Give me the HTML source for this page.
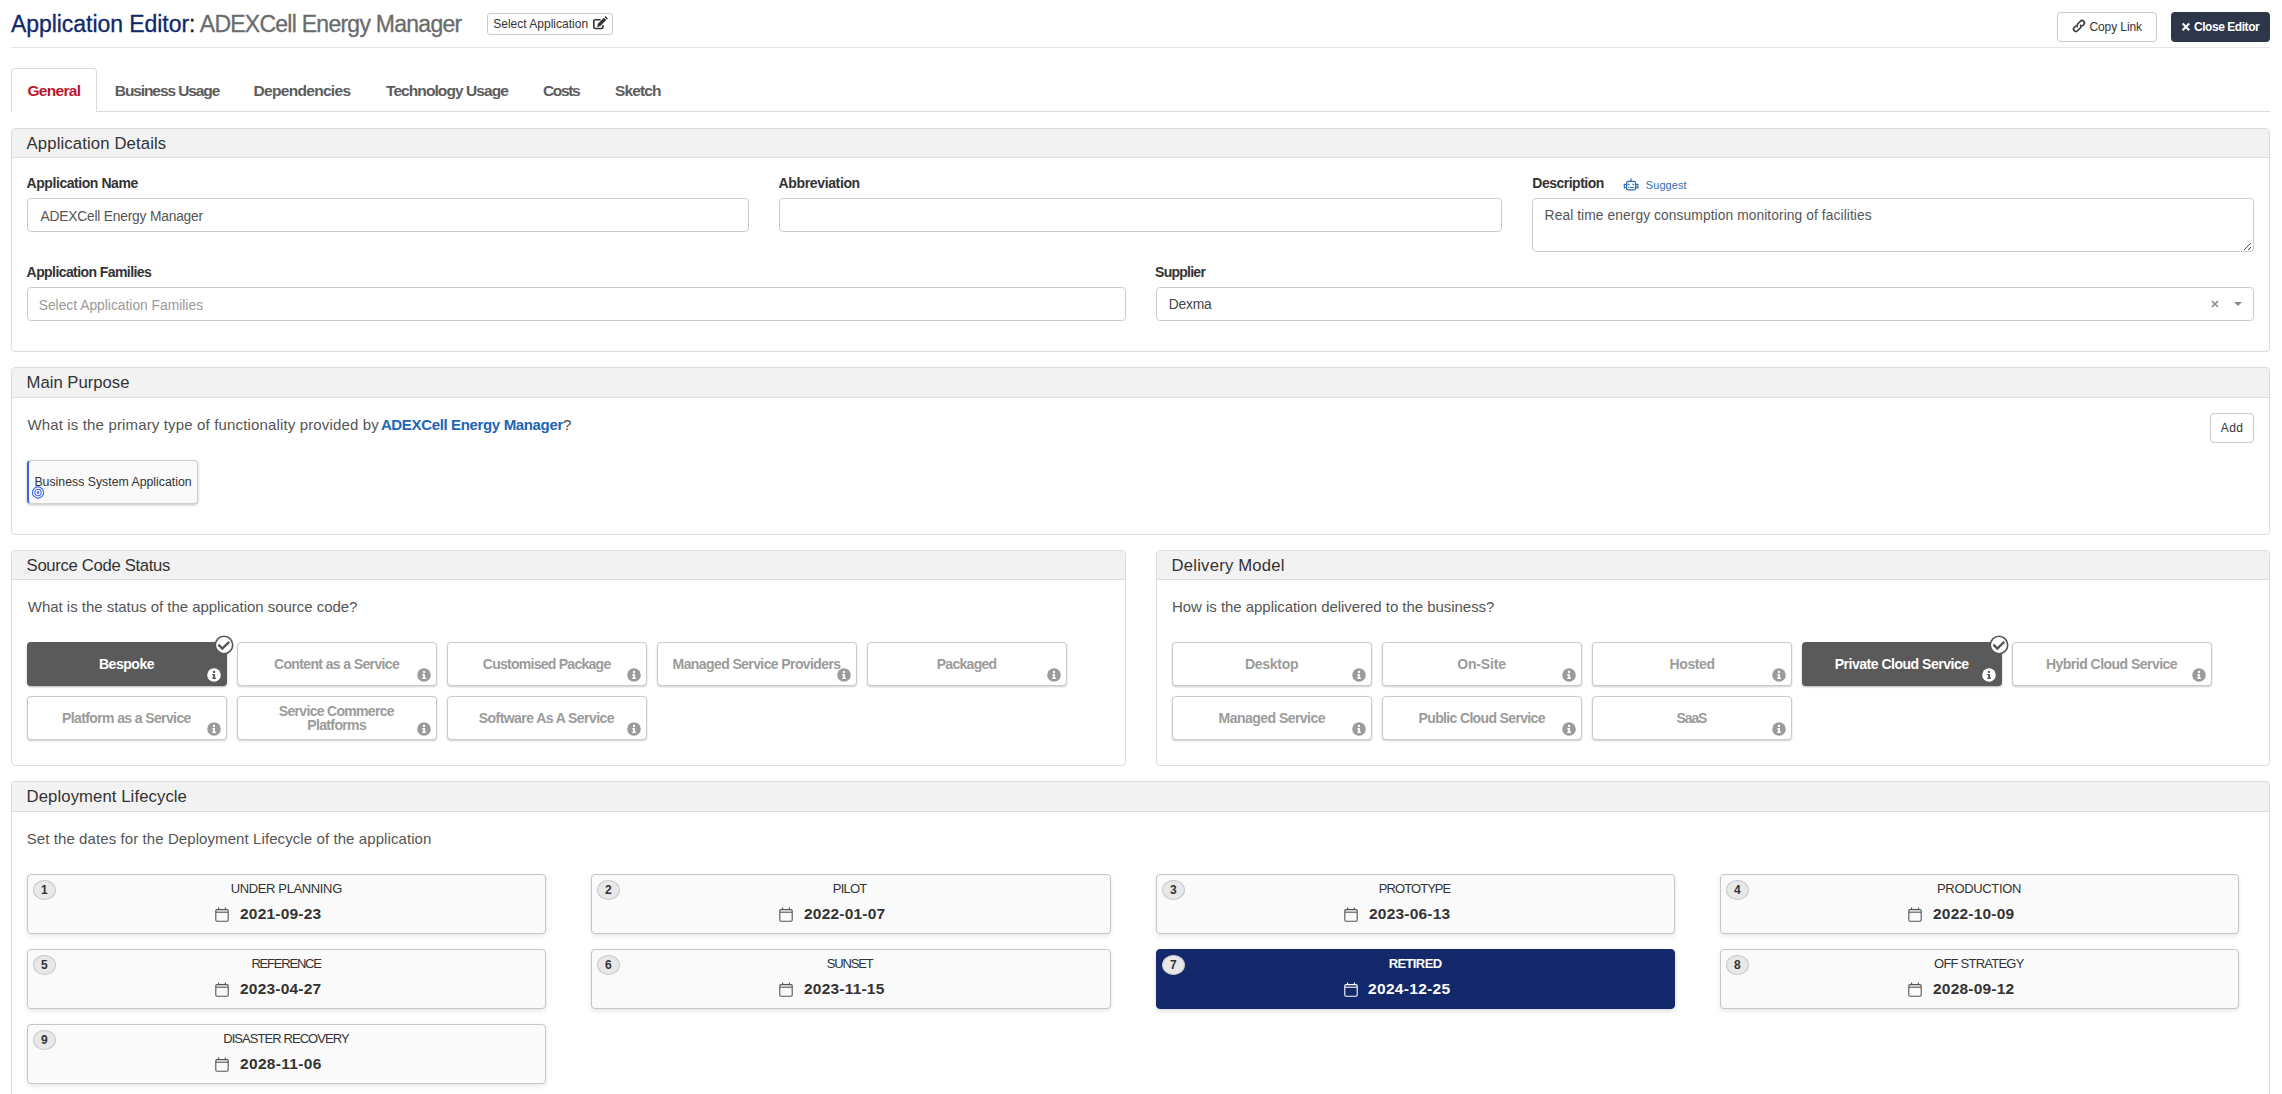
<!DOCTYPE html>
<html><head><meta charset="utf-8"><title>Application Editor</title>
<style>
html,body{margin:0;padding:0;background:#fff;width:2282px;height:1094px;overflow:hidden;font-family:"Liberation Sans", sans-serif;}
body{position:relative;}
svg{display:block}
</style></head><body>
<div id="t_title" style="position:absolute;left:11.00px;top:13.43px;font-size:23px;line-height:23px;font-weight:400;color:#0f2868;letter-spacing:-0.056px;white-space:nowrap;-webkit-text-stroke:0.3px #0f2868;">Application Editor<span style="color:#222;-webkit-text-stroke:0.3px #222">:</span></div>
<div id="t_title3" style="position:absolute;left:199.80px;top:13.43px;font-size:23px;line-height:23px;font-weight:400;color:#6b6b6b;letter-spacing:-0.743px;white-space:nowrap;-webkit-text-stroke:0.3px #6b6b6b;">ADEXCell Energy Manager</div>
<div style="position:absolute;left:487px;top:13px;width:126px;height:22px;box-sizing:border-box;border:1px solid #c9c9c9;border-radius:3px;background:#fff"></div>
<div id="t_selapp" style="position:absolute;left:493.20px;top:18.04px;font-size:12px;line-height:12px;font-weight:400;color:#333;letter-spacing:0.009px;white-space:nowrap;">Select Application</div>
<svg style="position:absolute;left:588px;top:12px" width="24" height="24" viewBox="0 0 24 24"><path d="M12.6 7.8 H7.2 Q5.8 7.8 5.8 9.2 V15.1 Q5.8 16.5 7.2 16.5 H13.6 Q15 16.5 15 15.1 V13" fill="none" stroke="#333" stroke-width="1.6"/><path d="M9.1 14.9 L9.9 11.7 L15.9 5.7 L18.3 8.1 L12.3 14.1 Z" fill="#333"/><path d="M16.5 5.1 L17.5 4.1 L19.9 6.5 L18.9 7.5 Z" fill="#333"/></svg>
<div style="position:absolute;left:2057px;top:12px;width:100px;height:30px;box-sizing:border-box;border:1px solid #c9c9c9;border-radius:4px;background:#fff"></div>
<svg style="position:absolute;left:2070.5px;top:18.4px" width="16" height="16" viewBox="-8 -8 16 16"><g transform="rotate(-45)" fill="none" stroke="#333" stroke-width="1.6"><path d="M-2 -2.3 H-4.4 A2.3 2.3 0 0 0 -4.4 2.3 H-0.5 A2.3 2.3 0 0 0 1.8 0"/><path d="M2 2.3 H4.4 A2.3 2.3 0 0 0 4.4 -2.3 H0.5 A2.3 2.3 0 0 0 -1.8 0"/></g></svg>
<div id="t_copy" style="position:absolute;left:2089.40px;top:21.04px;font-size:12px;line-height:12px;font-weight:400;color:#333;letter-spacing:-0.086px;white-space:nowrap;">Copy Link</div>
<div style="position:absolute;left:2171px;top:12px;width:99px;height:30px;box-sizing:border-box;border-radius:4px;background:#2e3649"></div>
<svg style="position:absolute;left:2181px;top:22px" width="10" height="10" viewBox="0 0 10 10"><path d="M1.6 1.6 L8.2 8.2 M8.2 1.6 L1.6 8.2" stroke="#fff" stroke-width="2.1"/></svg>
<div id="t_close" style="position:absolute;left:2194.00px;top:20.74px;font-size:12px;line-height:12px;font-weight:700;color:#fff;letter-spacing:-0.455px;white-space:nowrap;">Close Editor</div>
<div style="position:absolute;left:11px;top:47px;width:2259px;height:1px;box-sizing:border-box;background:#e6e6e6"></div>
<div style="position:absolute;left:11px;top:111px;width:2259px;height:1px;box-sizing:border-box;background:#dcdcdc"></div>
<div style="position:absolute;left:11px;top:68px;width:86px;height:44px;box-sizing:border-box;border:1px solid #dcdcdc;border-bottom:none;border-radius:4px 4px 0 0;background:#fff"></div>
<div id="t_tab1" style="position:absolute;left:27.40px;top:82.68px;font-size:15.5px;line-height:15.5px;font-weight:700;color:#b8172e;letter-spacing:-0.668px;white-space:nowrap;">General</div>
<div id="t_tab2" style="position:absolute;left:114.80px;top:82.68px;font-size:15.5px;line-height:15.5px;font-weight:700;color:#5c5c5c;letter-spacing:-1.098px;white-space:nowrap;">Business Usage</div>
<div id="t_tab3" style="position:absolute;left:253.50px;top:82.68px;font-size:15.5px;line-height:15.5px;font-weight:700;color:#5c5c5c;letter-spacing:-0.686px;white-space:nowrap;">Dependencies</div>
<div id="t_tab4" style="position:absolute;left:386.00px;top:82.68px;font-size:15.5px;line-height:15.5px;font-weight:700;color:#5c5c5c;letter-spacing:-0.915px;white-space:nowrap;">Technology Usage</div>
<div id="t_tab5" style="position:absolute;left:543.00px;top:82.68px;font-size:15.5px;line-height:15.5px;font-weight:700;color:#5c5c5c;letter-spacing:-1.350px;white-space:nowrap;">Costs</div>
<div id="t_tab6" style="position:absolute;left:615.00px;top:82.68px;font-size:15.5px;line-height:15.5px;font-weight:700;color:#5c5c5c;letter-spacing:-0.880px;white-space:nowrap;">Sketch</div>
<div style="position:absolute;left:11px;top:128px;width:2259px;height:224px;box-sizing:border-box;border:1px solid #dcdcdc;border-radius:4px;background:#fff;"></div>
<div style="position:absolute;left:12px;top:129px;width:2257px;height:29px;box-sizing:border-box;background:#f2f2f2;border-bottom:1px solid #dcdcdc;border-radius:3px 3px 0 0"></div>
<div id="t_p1" style="position:absolute;left:26.60px;top:135.86px;font-size:16.7px;line-height:16.7px;font-weight:400;color:#333;letter-spacing:0.130px;white-space:nowrap;">Application Details</div>
<div id="t_l1" style="position:absolute;left:26.60px;top:176.05px;font-size:14px;line-height:14px;font-weight:700;color:#333;letter-spacing:-0.441px;white-space:nowrap;">Application Name</div>
<div id="t_l2" style="position:absolute;left:778.60px;top:176.05px;font-size:14px;line-height:14px;font-weight:700;color:#333;letter-spacing:-0.365px;white-space:nowrap;">Abbreviation</div>
<div id="t_l3" style="position:absolute;left:1532.30px;top:176.15px;font-size:14px;line-height:14px;font-weight:700;color:#333;letter-spacing:-0.500px;white-space:nowrap;">Description</div>
<svg style="position:absolute;left:1618px;top:172px" width="26" height="26" viewBox="0 0 26 26"><g fill="none" stroke="#2f6db5" stroke-width="1.2"><rect x="8.6" y="9.4" width="9" height="8.4" rx="1.6"/><path d="M13 6.4 V9.4"/><rect x="6.3" y="12.4" width="2.2" height="3.4"/><rect x="17.7" y="12.4" width="2.2" height="3.4"/></g><g fill="#2f6db5"><circle cx="10.6" cy="12.4" r="0.9"/><circle cx="15.3" cy="12.4" r="0.9"/><circle cx="10.5" cy="15.5" r="0.6"/><rect x="11.9" y="15" width="4" height="1"/></g></svg>
<div id="t_sugg" style="position:absolute;left:1645.80px;top:180.39px;font-size:11px;line-height:11px;font-weight:400;color:#2f6db5;letter-spacing:0.071px;white-space:nowrap;">Suggest</div>
<div style="position:absolute;left:27px;top:198px;width:722px;height:34px;box-sizing:border-box;border:1px solid #cccccc;border-radius:4px;background:#fff"></div>
<div style="position:absolute;left:779px;top:198px;width:723px;height:34px;box-sizing:border-box;border:1px solid #cccccc;border-radius:4px;background:#fff"></div>
<div style="position:absolute;left:1532px;top:198px;width:722px;height:54px;box-sizing:border-box;border:1px solid #cccccc;border-radius:4px;background:#fff"></div>
<svg style="position:absolute;left:2243px;top:242px" width="9" height="9" viewBox="0 0 9 9"><path d="M1 8 L8 1 M5 8 L8 5" stroke="#444" stroke-width="1"/></svg>
<div id="t_in1" style="position:absolute;left:40.40px;top:210.02px;font-size:13.8px;line-height:13.8px;font-weight:400;color:#555;letter-spacing:-0.201px;white-space:nowrap;">ADEXCell Energy Manager</div>
<div id="t_in3" style="position:absolute;left:1544.60px;top:209.12px;font-size:13.8px;line-height:13.8px;font-weight:400;color:#555;letter-spacing:0.081px;white-space:nowrap;">Real time energy consumption monitoring of facilities</div>
<div id="t_l4" style="position:absolute;left:26.60px;top:264.95px;font-size:14px;line-height:14px;font-weight:700;color:#333;letter-spacing:-0.578px;white-space:nowrap;">Application Families</div>
<div id="t_l5" style="position:absolute;left:1155.10px;top:265.15px;font-size:14px;line-height:14px;font-weight:700;color:#333;letter-spacing:-0.751px;white-space:nowrap;">Supplier</div>
<div style="position:absolute;left:27px;top:287px;width:1099px;height:34px;box-sizing:border-box;border:1px solid #cccccc;border-radius:4px;background:#fff"></div>
<div style="position:absolute;left:1156px;top:287px;width:1098px;height:34px;box-sizing:border-box;border:1px solid #cccccc;border-radius:4px;background:#fff"></div>
<div id="t_in4" style="position:absolute;left:38.70px;top:299.12px;font-size:13.8px;line-height:13.8px;font-weight:400;color:#999;letter-spacing:0.009px;white-space:nowrap;">Select Application Families</div>
<div id="t_in5" style="position:absolute;left:1168.80px;top:297.52px;font-size:13.8px;line-height:13.8px;font-weight:400;color:#444;letter-spacing:-0.200px;white-space:nowrap;">Dexma</div>
<svg style="position:absolute;left:2211px;top:300px" width="8" height="8" viewBox="0 0 8 8"><path d="M1 1 L7 7 M7 1 L1 7" stroke="#888" stroke-width="1.6"/></svg>
<svg style="position:absolute;left:2234px;top:302px" width="8" height="4" viewBox="0 0 8 4"><path d="M0 0 H8 L4 4 Z" fill="#888"/></svg>
<div style="position:absolute;left:11px;top:367px;width:2259px;height:168px;box-sizing:border-box;border:1px solid #dcdcdc;border-radius:4px;background:#fff;"></div>
<div style="position:absolute;left:12px;top:368px;width:2257px;height:30px;box-sizing:border-box;background:#f2f2f2;border-bottom:1px solid #dcdcdc;border-radius:3px 3px 0 0"></div>
<div id="t_p2" style="position:absolute;left:26.60px;top:374.86px;font-size:16.7px;line-height:16.7px;font-weight:400;color:#333;letter-spacing:-0.007px;white-space:nowrap;">Main Purpose</div>
<div id="t_q1" style="position:absolute;left:27.40px;top:417.10px;font-size:15px;line-height:15px;font-weight:400;color:#555;letter-spacing:0.151px;white-space:nowrap;">What is the primary type of functionality provided by</div>
<div id="t_q1b" style="position:absolute;left:380.90px;top:417.10px;font-size:15px;line-height:15px;font-weight:700;color:#2065b5;letter-spacing:-0.351px;white-space:nowrap;">ADEXCell Energy Manager<span style="color:#444;font-weight:400">?</span></div>
<div style="position:absolute;left:2210px;top:413px;width:44px;height:30px;box-sizing:border-box;border:1px solid #c9c9c9;border-radius:4px;background:#fff"></div>
<div id="t_add" style="position:absolute;left:2220.70px;top:421.74px;font-size:12px;line-height:12px;font-weight:400;color:#333;letter-spacing:0.500px;white-space:nowrap;">Add</div>
<div style="position:absolute;left:27px;top:460px;width:171px;height:44px;box-sizing:border-box;border:1px solid #cfcfcf;border-left:2px solid #3c63f0;border-radius:4px;background:#fafafa;box-shadow:0 1px 3px rgba(0,0,0,.25)"></div>
<div id="t_bsa" style="position:absolute;left:34.40px;top:476.39px;font-size:12.3px;line-height:12.3px;font-weight:400;color:#333;letter-spacing:0.002px;white-space:nowrap;">Business System Application</div>
<svg style="position:absolute;left:31px;top:486px" width="14" height="14" viewBox="0 0 14 14"><g fill="none" stroke="#3c63f0"><circle cx="7" cy="6.5" r="5.6" stroke-width="1.1"/><circle cx="7" cy="6.5" r="3.2" stroke-width="1.1"/></g><circle cx="7" cy="6.5" r="1.3" fill="#3c63f0"/></svg>
<div style="position:absolute;left:11px;top:550px;width:1115px;height:216px;box-sizing:border-box;border:1px solid #dcdcdc;border-radius:4px;background:#fff;"></div>
<div style="position:absolute;left:12px;top:551px;width:1113px;height:29px;box-sizing:border-box;background:#f2f2f2;border-bottom:1px solid #dcdcdc;border-radius:3px 3px 0 0"></div>
<div id="t_p3" style="position:absolute;left:26.60px;top:557.86px;font-size:16.7px;line-height:16.7px;font-weight:400;color:#333;letter-spacing:-0.334px;white-space:nowrap;">Source Code Status</div>
<div id="t_q3" style="position:absolute;left:27.80px;top:599.30px;font-size:15px;line-height:15px;font-weight:400;color:#555;letter-spacing:-0.028px;white-space:nowrap;">What is the status of the application source code?</div>
<div style="position:absolute;left:27px;top:642px;width:200px;height:44px;box-sizing:border-box;border-radius:4px;background:#5a5a5a;box-shadow:0 1px 2px rgba(0,0,0,.3)"></div>
<div id="s1" style="position:absolute;left:98.95px;top:657.15px;font-size:14px;line-height:14px;font-weight:700;color:#fff;letter-spacing:-0.468px;white-space:nowrap;">Bespoke</div>
<svg style="position:absolute;left:207px;top:667.8px" width="14" height="14" viewBox="0 0 14 14"><circle cx="7" cy="7" r="6.8" fill="#fff"/><circle cx="7" cy="3.9" r="1.2" fill="#5a5a5a"/><path d="M5.3 6 H8 V9.6 H8.9 V11 H5.3 V9.6 H6.2 V7.4 H5.3 Z" fill="#5a5a5a"/></svg>
<svg style="position:absolute;left:214.3px;top:634.7px" width="20" height="20" viewBox="0 0 20 20"><circle cx="10" cy="10" r="8.7" fill="#fff" stroke="#555" stroke-width="1.6"/><path d="M4.4 9.6 L8.3 13.6 L15.2 6.9" fill="none" stroke="#555" stroke-width="2.4"/></svg>
<div style="position:absolute;left:237px;top:642px;width:200px;height:44px;box-sizing:border-box;border:1px solid #cbcbcb;border-radius:4px;background:#fff;box-shadow:0 1px 2px rgba(0,0,0,.2)"></div>
<div id="s2" style="position:absolute;left:273.90px;top:657.15px;font-size:14px;line-height:14px;font-weight:700;color:#9b9b9b;letter-spacing:-0.622px;white-space:nowrap;">Content as a Service</div>
<svg style="position:absolute;left:417px;top:667.8px" width="14" height="14" viewBox="0 0 14 14"><circle cx="7" cy="7" r="6.8" fill="#9b9b9b"/><circle cx="7" cy="3.9" r="1.2" fill="#fff"/><path d="M5.3 6 H8 V9.6 H8.9 V11 H5.3 V9.6 H6.2 V7.4 H5.3 Z" fill="#fff"/></svg>
<div style="position:absolute;left:447px;top:642px;width:200px;height:44px;box-sizing:border-box;border:1px solid #cbcbcb;border-radius:4px;background:#fff;box-shadow:0 1px 2px rgba(0,0,0,.2)"></div>
<div id="s3" style="position:absolute;left:482.85px;top:657.15px;font-size:14px;line-height:14px;font-weight:700;color:#9b9b9b;letter-spacing:-0.736px;white-space:nowrap;">Customised Package</div>
<svg style="position:absolute;left:627px;top:667.8px" width="14" height="14" viewBox="0 0 14 14"><circle cx="7" cy="7" r="6.8" fill="#9b9b9b"/><circle cx="7" cy="3.9" r="1.2" fill="#fff"/><path d="M5.3 6 H8 V9.6 H8.9 V11 H5.3 V9.6 H6.2 V7.4 H5.3 Z" fill="#fff"/></svg>
<div style="position:absolute;left:657px;top:642px;width:200px;height:44px;box-sizing:border-box;border:1px solid #cbcbcb;border-radius:4px;background:#fff;box-shadow:0 1px 2px rgba(0,0,0,.2)"></div>
<div id="s4" style="position:absolute;left:672.60px;top:657.15px;font-size:14px;line-height:14px;font-weight:700;color:#9b9b9b;letter-spacing:-0.598px;white-space:nowrap;">Managed Service Providers</div>
<svg style="position:absolute;left:837px;top:667.8px" width="14" height="14" viewBox="0 0 14 14"><circle cx="7" cy="7" r="6.8" fill="#9b9b9b"/><circle cx="7" cy="3.9" r="1.2" fill="#fff"/><path d="M5.3 6 H8 V9.6 H8.9 V11 H5.3 V9.6 H6.2 V7.4 H5.3 Z" fill="#fff"/></svg>
<div style="position:absolute;left:867px;top:642px;width:200px;height:44px;box-sizing:border-box;border:1px solid #cbcbcb;border-radius:4px;background:#fff;box-shadow:0 1px 2px rgba(0,0,0,.2)"></div>
<div id="s5" style="position:absolute;left:936.75px;top:657.15px;font-size:14px;line-height:14px;font-weight:700;color:#9b9b9b;letter-spacing:-0.713px;white-space:nowrap;">Packaged</div>
<svg style="position:absolute;left:1047px;top:667.8px" width="14" height="14" viewBox="0 0 14 14"><circle cx="7" cy="7" r="6.8" fill="#9b9b9b"/><circle cx="7" cy="3.9" r="1.2" fill="#fff"/><path d="M5.3 6 H8 V9.6 H8.9 V11 H5.3 V9.6 H6.2 V7.4 H5.3 Z" fill="#fff"/></svg>
<div style="position:absolute;left:27px;top:696px;width:200px;height:44px;box-sizing:border-box;border:1px solid #cbcbcb;border-radius:4px;background:#fff;box-shadow:0 1px 2px rgba(0,0,0,.2)"></div>
<div id="s6" style="position:absolute;left:62.10px;top:711.15px;font-size:14px;line-height:14px;font-weight:700;color:#9b9b9b;letter-spacing:-0.620px;white-space:nowrap;">Platform as a Service</div>
<svg style="position:absolute;left:207px;top:721.8px" width="14" height="14" viewBox="0 0 14 14"><circle cx="7" cy="7" r="6.8" fill="#9b9b9b"/><circle cx="7" cy="3.9" r="1.2" fill="#fff"/><path d="M5.3 6 H8 V9.6 H8.9 V11 H5.3 V9.6 H6.2 V7.4 H5.3 Z" fill="#fff"/></svg>
<div style="position:absolute;left:237px;top:696px;width:200px;height:44px;box-sizing:border-box;border:1px solid #cbcbcb;border-radius:4px;background:#fff;box-shadow:0 1px 2px rgba(0,0,0,.2)"></div>
<div id="s7a" style="position:absolute;left:278.85px;top:703.95px;font-size:14px;line-height:14px;font-weight:700;color:#9b9b9b;letter-spacing:-0.691px;white-space:nowrap;">Service Commerce</div>
<div id="s7b" style="position:absolute;left:307.30px;top:717.85px;font-size:14px;line-height:14px;font-weight:700;color:#9b9b9b;letter-spacing:-0.650px;white-space:nowrap;">Platforms</div>
<svg style="position:absolute;left:417px;top:721.8px" width="14" height="14" viewBox="0 0 14 14"><circle cx="7" cy="7" r="6.8" fill="#9b9b9b"/><circle cx="7" cy="3.9" r="1.2" fill="#fff"/><path d="M5.3 6 H8 V9.6 H8.9 V11 H5.3 V9.6 H6.2 V7.4 H5.3 Z" fill="#fff"/></svg>
<div style="position:absolute;left:447px;top:696px;width:200px;height:44px;box-sizing:border-box;border:1px solid #cbcbcb;border-radius:4px;background:#fff;box-shadow:0 1px 2px rgba(0,0,0,.2)"></div>
<div id="s8" style="position:absolute;left:478.85px;top:711.15px;font-size:14px;line-height:14px;font-weight:700;color:#9b9b9b;letter-spacing:-0.570px;white-space:nowrap;">Software As A Service</div>
<svg style="position:absolute;left:627px;top:721.8px" width="14" height="14" viewBox="0 0 14 14"><circle cx="7" cy="7" r="6.8" fill="#9b9b9b"/><circle cx="7" cy="3.9" r="1.2" fill="#fff"/><path d="M5.3 6 H8 V9.6 H8.9 V11 H5.3 V9.6 H6.2 V7.4 H5.3 Z" fill="#fff"/></svg>
<div style="position:absolute;left:1156px;top:550px;width:1114px;height:216px;box-sizing:border-box;border:1px solid #dcdcdc;border-radius:4px;background:#fff;"></div>
<div style="position:absolute;left:1157px;top:551px;width:1112px;height:29px;box-sizing:border-box;background:#f2f2f2;border-bottom:1px solid #dcdcdc;border-radius:3px 3px 0 0"></div>
<div id="t_p4" style="position:absolute;left:1171.60px;top:557.86px;font-size:16.7px;line-height:16.7px;font-weight:400;color:#333;letter-spacing:0.195px;white-space:nowrap;">Delivery Model</div>
<div id="t_q4" style="position:absolute;left:1172.00px;top:599.30px;font-size:15px;line-height:15px;font-weight:400;color:#555;letter-spacing:-0.041px;white-space:nowrap;">How is the application delivered to the business?</div>
<div style="position:absolute;left:1172px;top:642px;width:200px;height:44px;box-sizing:border-box;border:1px solid #cbcbcb;border-radius:4px;background:#fff;box-shadow:0 1px 2px rgba(0,0,0,.2)"></div>
<div id="d1" style="position:absolute;left:1244.90px;top:657.15px;font-size:14px;line-height:14px;font-weight:700;color:#9b9b9b;letter-spacing:-0.261px;white-space:nowrap;">Desktop</div>
<svg style="position:absolute;left:1352px;top:667.8px" width="14" height="14" viewBox="0 0 14 14"><circle cx="7" cy="7" r="6.8" fill="#9b9b9b"/><circle cx="7" cy="3.9" r="1.2" fill="#fff"/><path d="M5.3 6 H8 V9.6 H8.9 V11 H5.3 V9.6 H6.2 V7.4 H5.3 Z" fill="#fff"/></svg>
<div style="position:absolute;left:1382px;top:642px;width:200px;height:44px;box-sizing:border-box;border:1px solid #cbcbcb;border-radius:4px;background:#fff;box-shadow:0 1px 2px rgba(0,0,0,.2)"></div>
<div id="d2" style="position:absolute;left:1457.25px;top:657.15px;font-size:14px;line-height:14px;font-weight:700;color:#9b9b9b;letter-spacing:-0.167px;white-space:nowrap;">On-Site</div>
<svg style="position:absolute;left:1562px;top:667.8px" width="14" height="14" viewBox="0 0 14 14"><circle cx="7" cy="7" r="6.8" fill="#9b9b9b"/><circle cx="7" cy="3.9" r="1.2" fill="#fff"/><path d="M5.3 6 H8 V9.6 H8.9 V11 H5.3 V9.6 H6.2 V7.4 H5.3 Z" fill="#fff"/></svg>
<div style="position:absolute;left:1592px;top:642px;width:200px;height:44px;box-sizing:border-box;border:1px solid #cbcbcb;border-radius:4px;background:#fff;box-shadow:0 1px 2px rgba(0,0,0,.2)"></div>
<div id="d3" style="position:absolute;left:1669.45px;top:657.15px;font-size:14px;line-height:14px;font-weight:700;color:#9b9b9b;letter-spacing:-0.360px;white-space:nowrap;">Hosted</div>
<svg style="position:absolute;left:1772px;top:667.8px" width="14" height="14" viewBox="0 0 14 14"><circle cx="7" cy="7" r="6.8" fill="#9b9b9b"/><circle cx="7" cy="3.9" r="1.2" fill="#fff"/><path d="M5.3 6 H8 V9.6 H8.9 V11 H5.3 V9.6 H6.2 V7.4 H5.3 Z" fill="#fff"/></svg>
<div style="position:absolute;left:1802px;top:642px;width:200px;height:44px;box-sizing:border-box;border-radius:4px;background:#5a5a5a;box-shadow:0 1px 2px rgba(0,0,0,.3)"></div>
<div id="d4" style="position:absolute;left:1834.65px;top:657.15px;font-size:14px;line-height:14px;font-weight:700;color:#fff;letter-spacing:-0.480px;white-space:nowrap;">Private Cloud Service</div>
<svg style="position:absolute;left:1982px;top:667.8px" width="14" height="14" viewBox="0 0 14 14"><circle cx="7" cy="7" r="6.8" fill="#fff"/><circle cx="7" cy="3.9" r="1.2" fill="#5a5a5a"/><path d="M5.3 6 H8 V9.6 H8.9 V11 H5.3 V9.6 H6.2 V7.4 H5.3 Z" fill="#5a5a5a"/></svg>
<svg style="position:absolute;left:1989.3px;top:634.7px" width="20" height="20" viewBox="0 0 20 20"><circle cx="10" cy="10" r="8.7" fill="#fff" stroke="#555" stroke-width="1.6"/><path d="M4.4 9.6 L8.3 13.6 L15.2 6.9" fill="none" stroke="#555" stroke-width="2.4"/></svg>
<div style="position:absolute;left:2012px;top:642px;width:200px;height:44px;box-sizing:border-box;border:1px solid #cbcbcb;border-radius:4px;background:#fff;box-shadow:0 1px 2px rgba(0,0,0,.2)"></div>
<div id="d5" style="position:absolute;left:2046.00px;top:657.15px;font-size:14px;line-height:14px;font-weight:700;color:#9b9b9b;letter-spacing:-0.526px;white-space:nowrap;">Hybrid Cloud Service</div>
<svg style="position:absolute;left:2192px;top:667.8px" width="14" height="14" viewBox="0 0 14 14"><circle cx="7" cy="7" r="6.8" fill="#9b9b9b"/><circle cx="7" cy="3.9" r="1.2" fill="#fff"/><path d="M5.3 6 H8 V9.6 H8.9 V11 H5.3 V9.6 H6.2 V7.4 H5.3 Z" fill="#fff"/></svg>
<div style="position:absolute;left:1172px;top:696px;width:200px;height:44px;box-sizing:border-box;border:1px solid #cbcbcb;border-radius:4px;background:#fff;box-shadow:0 1px 2px rgba(0,0,0,.2)"></div>
<div id="d6" style="position:absolute;left:1218.60px;top:711.15px;font-size:14px;line-height:14px;font-weight:700;color:#9b9b9b;letter-spacing:-0.534px;white-space:nowrap;">Managed Service</div>
<svg style="position:absolute;left:1352px;top:721.8px" width="14" height="14" viewBox="0 0 14 14"><circle cx="7" cy="7" r="6.8" fill="#9b9b9b"/><circle cx="7" cy="3.9" r="1.2" fill="#fff"/><path d="M5.3 6 H8 V9.6 H8.9 V11 H5.3 V9.6 H6.2 V7.4 H5.3 Z" fill="#fff"/></svg>
<div style="position:absolute;left:1382px;top:696px;width:200px;height:44px;box-sizing:border-box;border:1px solid #cbcbcb;border-radius:4px;background:#fff;box-shadow:0 1px 2px rgba(0,0,0,.2)"></div>
<div id="d7" style="position:absolute;left:1418.55px;top:711.15px;font-size:14px;line-height:14px;font-weight:700;color:#9b9b9b;letter-spacing:-0.647px;white-space:nowrap;">Public Cloud Service</div>
<svg style="position:absolute;left:1562px;top:721.8px" width="14" height="14" viewBox="0 0 14 14"><circle cx="7" cy="7" r="6.8" fill="#9b9b9b"/><circle cx="7" cy="3.9" r="1.2" fill="#fff"/><path d="M5.3 6 H8 V9.6 H8.9 V11 H5.3 V9.6 H6.2 V7.4 H5.3 Z" fill="#fff"/></svg>
<div style="position:absolute;left:1592px;top:696px;width:200px;height:44px;box-sizing:border-box;border:1px solid #cbcbcb;border-radius:4px;background:#fff;box-shadow:0 1px 2px rgba(0,0,0,.2)"></div>
<div id="d8" style="position:absolute;left:1676.60px;top:711.15px;font-size:14px;line-height:14px;font-weight:700;color:#9b9b9b;letter-spacing:-1.134px;white-space:nowrap;">SaaS</div>
<svg style="position:absolute;left:1772px;top:721.8px" width="14" height="14" viewBox="0 0 14 14"><circle cx="7" cy="7" r="6.8" fill="#9b9b9b"/><circle cx="7" cy="3.9" r="1.2" fill="#fff"/><path d="M5.3 6 H8 V9.6 H8.9 V11 H5.3 V9.6 H6.2 V7.4 H5.3 Z" fill="#fff"/></svg>
<div style="position:absolute;left:11px;top:781px;width:2259px;height:340px;box-sizing:border-box;border:1px solid #dcdcdc;border-radius:4px;background:#fff;border-bottom:none;border-bottom-left-radius:0;border-bottom-right-radius:0;"></div>
<div style="position:absolute;left:12px;top:782px;width:2257px;height:30px;box-sizing:border-box;background:#f2f2f2;border-bottom:1px solid #dcdcdc;border-radius:3px 3px 0 0"></div>
<div id="t_p5" style="position:absolute;left:26.60px;top:788.86px;font-size:16.7px;line-height:16.7px;font-weight:400;color:#333;letter-spacing:0.089px;white-space:nowrap;">Deployment Lifecycle</div>
<div id="t_q5" style="position:absolute;left:26.70px;top:830.90px;font-size:15px;line-height:15px;font-weight:400;color:#555;letter-spacing:0.088px;white-space:nowrap;">Set the dates for the Deployment Lifecycle of the application</div>
<div style="position:absolute;left:27px;top:874px;width:519px;height:60px;box-sizing:border-box;border:1px solid #c6c6c6;border-radius:4px;background:#fafafa;box-shadow:0 2px 5px rgba(0,0,0,.1)"></div>
<div style="position:absolute;left:33px;top:880px;width:22.5px;height:20px;box-sizing:border-box;border:1px solid #c9c9c9;border-radius:50%;background:#e8e8e8"></div>
<div style="position:absolute;left:33px;top:880px;width:22.5px;height:20px;line-height:20px;text-align:center;font-size:12px;font-weight:700;color:#333">1</div>
<div id="c1t" style="position:absolute;left:230.70px;top:882.00px;font-size:13px;line-height:13px;font-weight:400;color:#333;letter-spacing:-0.364px;white-space:nowrap;">UNDER PLANNING</div>
<svg style="position:absolute;left:215px;top:907px" width="14" height="15" viewBox="0 0 14 15"><g fill="none" stroke="#555" stroke-width="1.1"><rect x="0.8" y="2.6" width="12.4" height="11.6" rx="1.2"/><path d="M0.8 5.2 H13.2"/><path d="M3.6 0.4 V3 M10.4 0.4 V3"/></g></svg>
<div id="c1d" style="position:absolute;left:240.00px;top:906.38px;font-size:15.5px;line-height:15.5px;font-weight:700;color:#333;letter-spacing:0.210px;white-space:nowrap;">2021-09-23</div>
<div style="position:absolute;left:591px;top:874px;width:520px;height:60px;box-sizing:border-box;border:1px solid #c6c6c6;border-radius:4px;background:#fafafa;box-shadow:0 2px 5px rgba(0,0,0,.1)"></div>
<div style="position:absolute;left:597px;top:880px;width:22.5px;height:20px;box-sizing:border-box;border:1px solid #c9c9c9;border-radius:50%;background:#e8e8e8"></div>
<div style="position:absolute;left:597px;top:880px;width:22.5px;height:20px;line-height:20px;text-align:center;font-size:12px;font-weight:700;color:#333">2</div>
<div id="c2t" style="position:absolute;left:832.75px;top:882.00px;font-size:13px;line-height:13px;font-weight:400;color:#333;letter-spacing:-0.750px;white-space:nowrap;">PILOT</div>
<svg style="position:absolute;left:779px;top:907px" width="14" height="15" viewBox="0 0 14 15"><g fill="none" stroke="#555" stroke-width="1.1"><rect x="0.8" y="2.6" width="12.4" height="11.6" rx="1.2"/><path d="M0.8 5.2 H13.2"/><path d="M3.6 0.4 V3 M10.4 0.4 V3"/></g></svg>
<div id="c2d" style="position:absolute;left:804.00px;top:906.38px;font-size:15.5px;line-height:15.5px;font-weight:700;color:#333;letter-spacing:0.210px;white-space:nowrap;">2022-01-07</div>
<div style="position:absolute;left:1156px;top:874px;width:519px;height:60px;box-sizing:border-box;border:1px solid #c6c6c6;border-radius:4px;background:#fafafa;box-shadow:0 2px 5px rgba(0,0,0,.1)"></div>
<div style="position:absolute;left:1162px;top:880px;width:22.5px;height:20px;box-sizing:border-box;border:1px solid #c9c9c9;border-radius:50%;background:#e8e8e8"></div>
<div style="position:absolute;left:1162px;top:880px;width:22.5px;height:20px;line-height:20px;text-align:center;font-size:12px;font-weight:700;color:#333">3</div>
<div id="c3t" style="position:absolute;left:1378.85px;top:882.00px;font-size:13px;line-height:13px;font-weight:400;color:#333;letter-spacing:-0.939px;white-space:nowrap;">PROTOTYPE</div>
<svg style="position:absolute;left:1344px;top:907px" width="14" height="15" viewBox="0 0 14 15"><g fill="none" stroke="#555" stroke-width="1.1"><rect x="0.8" y="2.6" width="12.4" height="11.6" rx="1.2"/><path d="M0.8 5.2 H13.2"/><path d="M3.6 0.4 V3 M10.4 0.4 V3"/></g></svg>
<div id="c3d" style="position:absolute;left:1369.00px;top:906.38px;font-size:15.5px;line-height:15.5px;font-weight:700;color:#333;letter-spacing:0.210px;white-space:nowrap;">2023-06-13</div>
<div style="position:absolute;left:1720px;top:874px;width:519px;height:60px;box-sizing:border-box;border:1px solid #c6c6c6;border-radius:4px;background:#fafafa;box-shadow:0 2px 5px rgba(0,0,0,.1)"></div>
<div style="position:absolute;left:1726px;top:880px;width:22.5px;height:20px;box-sizing:border-box;border:1px solid #c9c9c9;border-radius:50%;background:#e8e8e8"></div>
<div style="position:absolute;left:1726px;top:880px;width:22.5px;height:20px;line-height:20px;text-align:center;font-size:12px;font-weight:700;color:#333">4</div>
<div id="c4t" style="position:absolute;left:1937.00px;top:882.00px;font-size:13px;line-height:13px;font-weight:400;color:#333;letter-spacing:-0.333px;white-space:nowrap;">PRODUCTION</div>
<svg style="position:absolute;left:1908px;top:907px" width="14" height="15" viewBox="0 0 14 15"><g fill="none" stroke="#555" stroke-width="1.1"><rect x="0.8" y="2.6" width="12.4" height="11.6" rx="1.2"/><path d="M0.8 5.2 H13.2"/><path d="M3.6 0.4 V3 M10.4 0.4 V3"/></g></svg>
<div id="c4d" style="position:absolute;left:1933.00px;top:906.38px;font-size:15.5px;line-height:15.5px;font-weight:700;color:#333;letter-spacing:0.210px;white-space:nowrap;">2022-10-09</div>
<div style="position:absolute;left:27px;top:949px;width:519px;height:60px;box-sizing:border-box;border:1px solid #c6c6c6;border-radius:4px;background:#fafafa;box-shadow:0 2px 5px rgba(0,0,0,.1)"></div>
<div style="position:absolute;left:33px;top:955px;width:22.5px;height:20px;box-sizing:border-box;border:1px solid #c9c9c9;border-radius:50%;background:#e8e8e8"></div>
<div style="position:absolute;left:33px;top:955px;width:22.5px;height:20px;line-height:20px;text-align:center;font-size:12px;font-weight:700;color:#333">5</div>
<div id="c5t" style="position:absolute;left:251.40px;top:957.00px;font-size:13px;line-height:13px;font-weight:400;color:#333;letter-spacing:-1.200px;white-space:nowrap;">REFERENCE</div>
<svg style="position:absolute;left:215px;top:982px" width="14" height="15" viewBox="0 0 14 15"><g fill="none" stroke="#555" stroke-width="1.1"><rect x="0.8" y="2.6" width="12.4" height="11.6" rx="1.2"/><path d="M0.8 5.2 H13.2"/><path d="M3.6 0.4 V3 M10.4 0.4 V3"/></g></svg>
<div id="c5d" style="position:absolute;left:240.00px;top:981.38px;font-size:15.5px;line-height:15.5px;font-weight:700;color:#333;letter-spacing:0.210px;white-space:nowrap;">2023-04-27</div>
<div style="position:absolute;left:591px;top:949px;width:520px;height:60px;box-sizing:border-box;border:1px solid #c6c6c6;border-radius:4px;background:#fafafa;box-shadow:0 2px 5px rgba(0,0,0,.1)"></div>
<div style="position:absolute;left:597px;top:955px;width:22.5px;height:20px;box-sizing:border-box;border:1px solid #c9c9c9;border-radius:50%;background:#e8e8e8"></div>
<div style="position:absolute;left:597px;top:955px;width:22.5px;height:20px;line-height:20px;text-align:center;font-size:12px;font-weight:700;color:#333">6</div>
<div id="c6t" style="position:absolute;left:826.70px;top:957.00px;font-size:13px;line-height:13px;font-weight:400;color:#333;letter-spacing:-1.160px;white-space:nowrap;">SUNSET</div>
<svg style="position:absolute;left:779px;top:982px" width="14" height="15" viewBox="0 0 14 15"><g fill="none" stroke="#555" stroke-width="1.1"><rect x="0.8" y="2.6" width="12.4" height="11.6" rx="1.2"/><path d="M0.8 5.2 H13.2"/><path d="M3.6 0.4 V3 M10.4 0.4 V3"/></g></svg>
<div id="c6d" style="position:absolute;left:804.00px;top:981.38px;font-size:15.5px;line-height:15.5px;font-weight:700;color:#333;letter-spacing:0.210px;white-space:nowrap;">2023-11-15</div>
<div style="position:absolute;left:1156px;top:949px;width:519px;height:60px;box-sizing:border-box;border:1px solid #13296b;border-radius:4px;background:#13296b;box-shadow:0 2px 5px rgba(0,0,0,.15)"></div>
<div style="position:absolute;left:1162px;top:955px;width:22.5px;height:20px;box-sizing:border-box;border:1px solid #c9c9c9;border-radius:50%;background:#e8e8e8"></div>
<div style="position:absolute;left:1162px;top:955px;width:22.5px;height:20px;line-height:20px;text-align:center;font-size:12px;font-weight:700;color:#333">7</div>
<div id="c7t" style="position:absolute;left:1388.65px;top:957.00px;font-size:13px;line-height:13px;font-weight:700;color:#fff;letter-spacing:-0.603px;white-space:nowrap;">RETIRED</div>
<svg style="position:absolute;left:1344px;top:982px" width="14" height="15" viewBox="0 0 14 15"><g fill="none" stroke="#fff" stroke-width="1.1"><rect x="0.8" y="2.6" width="12.4" height="11.6" rx="1.2"/><path d="M0.8 5.2 H13.2"/><path d="M3.6 0.4 V3 M10.4 0.4 V3"/></g></svg>
<div id="c7d" style="position:absolute;left:1368.00px;top:981.38px;font-size:15.5px;line-height:15.5px;font-weight:700;color:#fff;letter-spacing:0.320px;white-space:nowrap;">2024-12-25</div>
<div style="position:absolute;left:1720px;top:949px;width:519px;height:60px;box-sizing:border-box;border:1px solid #c6c6c6;border-radius:4px;background:#fafafa;box-shadow:0 2px 5px rgba(0,0,0,.1)"></div>
<div style="position:absolute;left:1726px;top:955px;width:22.5px;height:20px;box-sizing:border-box;border:1px solid #c9c9c9;border-radius:50%;background:#e8e8e8"></div>
<div style="position:absolute;left:1726px;top:955px;width:22.5px;height:20px;line-height:20px;text-align:center;font-size:12px;font-weight:700;color:#333">8</div>
<div id="c8t" style="position:absolute;left:1934.10px;top:957.00px;font-size:13px;line-height:13px;font-weight:400;color:#333;letter-spacing:-0.769px;white-space:nowrap;">OFF STRATEGY</div>
<svg style="position:absolute;left:1908px;top:982px" width="14" height="15" viewBox="0 0 14 15"><g fill="none" stroke="#555" stroke-width="1.1"><rect x="0.8" y="2.6" width="12.4" height="11.6" rx="1.2"/><path d="M0.8 5.2 H13.2"/><path d="M3.6 0.4 V3 M10.4 0.4 V3"/></g></svg>
<div id="c8d" style="position:absolute;left:1933.00px;top:981.38px;font-size:15.5px;line-height:15.5px;font-weight:700;color:#333;letter-spacing:0.210px;white-space:nowrap;">2028-09-12</div>
<div style="position:absolute;left:27px;top:1024px;width:519px;height:60px;box-sizing:border-box;border:1px solid #c6c6c6;border-radius:4px;background:#fafafa;box-shadow:0 2px 5px rgba(0,0,0,.1)"></div>
<div style="position:absolute;left:33px;top:1030px;width:22.5px;height:20px;box-sizing:border-box;border:1px solid #c9c9c9;border-radius:50%;background:#e8e8e8"></div>
<div style="position:absolute;left:33px;top:1030px;width:22.5px;height:20px;line-height:20px;text-align:center;font-size:12px;font-weight:700;color:#333">9</div>
<div id="c9t" style="position:absolute;left:223.20px;top:1032.00px;font-size:13px;line-height:13px;font-weight:400;color:#333;letter-spacing:-0.931px;white-space:nowrap;">DISASTER RECOVERY</div>
<svg style="position:absolute;left:215px;top:1057px" width="14" height="15" viewBox="0 0 14 15"><g fill="none" stroke="#555" stroke-width="1.1"><rect x="0.8" y="2.6" width="12.4" height="11.6" rx="1.2"/><path d="M0.8 5.2 H13.2"/><path d="M3.6 0.4 V3 M10.4 0.4 V3"/></g></svg>
<div id="c9d" style="position:absolute;left:240.00px;top:1056.38px;font-size:15.5px;line-height:15.5px;font-weight:700;color:#333;letter-spacing:0.321px;white-space:nowrap;">2028-11-06</div>
</body></html>
